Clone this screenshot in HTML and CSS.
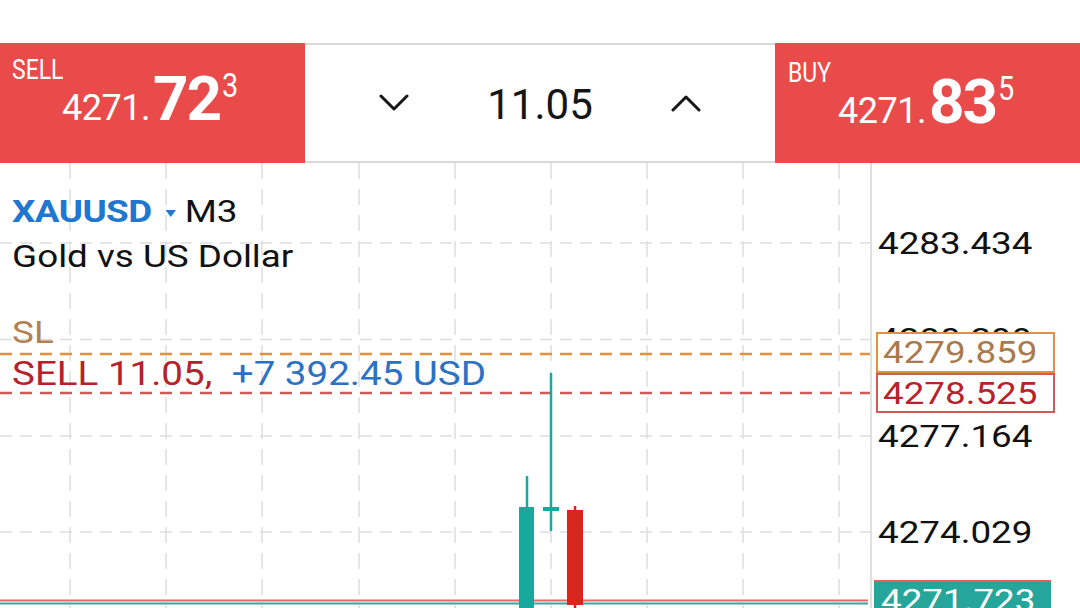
FILE: index.html
```html
<!DOCTYPE html>
<html lang="en">
<head>
    <meta charset="UTF-8">
    <meta name="viewport" content="width=device-width, initial-scale=1.0">
    <title>XAUUSD M3</title>
    <link rel="stylesheet" href="styles.css">
</head>
<body>

    <div class="status"></div>

    <div class="trade-bar">
        <div class="quote sell">
            <div class="quote-label">SELL</div>
            <div class="quote-price">
                <span class="price-pre">4271.</span>
                <span class="price-big">72</span>
                <span class="price-pip">3</span>
            </div>
        </div>

        <div class="volume">
            <svg class="chevron" width="30" height="18" viewBox="0 0 30 18">
                <path d="M2 2 L15 15 L28 2" />
            </svg>
            <span class="volume-value">11.05</span>
            <svg class="chevron" width="30" height="18" viewBox="0 0 30 18">
                <path d="M2 16 L15 3 L28 16" />
            </svg>
        </div>

        <div class="quote buy">
            <div class="quote-label">BUY</div>
            <div class="quote-price">
                <span class="price-pre">4271.</span>
                <span class="price-big">83</span>
                <span class="price-pip">5</span>
            </div>
        </div>
    </div>

    <div class="chart">
        <div class="plot">
            <svg class="plot-lines" width="870" height="445" viewBox="0 0 870 445">
                <!-- grid -->
                <path class="grid-h" d="M0 80H870 M0 176.5H870 M0 273H870 M0 369H870" />
                <path class="grid-v" d="M70 0V445 M166 0V445 M262 0V445 M359 0V445 M455 0V445 M551 0V445 M647 0V445 M743 0V445 M839 0V445" />

                <!-- trade levels -->
                <path class="level-sl" d="M0 191H870" />
                <path class="level-entry" d="M0 230H870" />
                <path class="line-ask" d="M0 437.5H868" />
                <path class="line-bid" d="M0 440.5H868" />

                <!-- candles -->
                <line class="wick up" x1="527" y1="313" x2="527" y2="344" />
                <rect class="body up" x="519" y="344" width="15" height="110" />
                <line class="wick up" x1="551" y1="210" x2="551" y2="368" />
                <rect class="body up" x="543" y="344" width="16" height="4" />
                <line class="wick down" x1="575" y1="343" x2="575" y2="445" />
                <rect class="body down" x="567" y="347" width="16" height="95" />
            </svg>

            <div class="chart-info">
                <div class="symbol">
                    <span class="ticker">XAUUSD</span>
                    <svg class="caret" width="9" height="7" viewBox="0 0 9 7"><path d="M0 0H9L4.5 7Z" /></svg>
                    <span class="period">M3</span>
                </div>
                <div class="desc">Gold vs US Dollar</div>
                <div class="sl-label">SL</div>
                <div class="pos-label">
                    <span class="pos-side">SELL 11.05,</span><span class="pos-profit">+7 392.45 USD</span>
                </div>
            </div>
        </div>

        <div class="axis">
            <span class="tick-label" style="top: 80px">4283.434</span>
            <span class="tick-label" style="top: 176px">4280.299</span>
            <span class="tick-label" style="top: 273px">4277.164</span>
            <span class="tick-label" style="top: 369px">4274.029</span>

            <div class="level-box sl" style="top: 169px"><span>4279.859</span></div>
            <div class="level-box entry" style="top: 210px"><span>4278.525</span></div>
            <div class="level-box bid" style="top: 417px"><span>4271.723</span></div>
        </div>
    </div>

</body>
</html>
```

FILE: styles.css
```css
* {
    margin: 0px;
    padding: 0px;
    box-sizing: border-box;
}

body {
    font-family: 'Roboto', 'Liberation Sans', sans-serif;
    background: #fff;
    width: 1080px;
    height: 608px;
    overflow: hidden;
    color: #111;
}

.status {
    height: 43px;
}

/* order bar */
.trade-bar {
    display: flex;
    height: 120px;
}

.quote {
    width: 305px;
    background: #e94b4b;
    color: #fff;
    display: flex;
    align-items: flex-start;
    padding: 13px 0 0 12px;
}

.quote.buy {
    padding: 16px 0 0 13px;
}

.quote-label {
    width: 50px;
    font-size: 28px;
    line-height: 28px;
    white-space: nowrap;
    transform: scaleX(0.82);
    transform-origin: left center;
}

.quote-price {
    display: flex;
    align-items: baseline;
    margin-top: 12px;
}

.price-pre {
    font-size: 36px;
    line-height: 36px;
    letter-spacing: -0.5px;
}

.price-big {
    font-size: 62px;
    line-height: 62px;
    font-weight: bold;
    letter-spacing: -2px;
    margin-left: 3px;
}

.price-pip {
    align-self: flex-start;
    font-size: 34px;
    line-height: 34px;
    margin-left: 2px;
    transform: scaleX(0.85);
    transform-origin: left center;
}

.volume {
    flex: 1;
    display: flex;
    align-items: center;
    justify-content: center;
    gap: 78px;
    border-top: 2px solid #d9d9d9;
    border-bottom: 2px solid #d9d9d9;
}

.volume-value {
    font-size: 42px;
    line-height: 42px;
    color: #151515;
    margin-top: 4px;
}

.chevron path {
    fill: none;
    stroke: #151515;
    stroke-width: 3;
    stroke-linecap: round;
    stroke-linejoin: round;
}

/* chart */
.chart {
    display: flex;
    height: 445px;
}

.plot {
    position: relative;
    width: 870px;
    overflow: hidden;
}

.plot-lines {
    position: absolute;
    left: 0;
    top: 0;
}

.grid-h, .grid-v {
    fill: none;
    stroke: #dedede;
    stroke-width: 1.5;
}

.grid-h {
    stroke-dasharray: 12 8;
}

.grid-v {
    stroke-dasharray: 16 10;
}

.level-sl, .level-entry {
    stroke-width: 2.5;
    stroke-dasharray: 12 8;
}

.level-sl {
    stroke: #e3913f;
}

.level-entry {
    stroke: #cf5a5a;
}

.line-ask {
    stroke: #e46b6b;
    stroke-width: 2;
}

.line-bid {
    stroke: #35a9a0;
    stroke-width: 2;
}

.wick {
    stroke-width: 2.5;
}

.wick.up {
    stroke: #17a89e;
}

.wick.down {
    stroke: #d9261c;
}

.body.up {
    fill: #17a89e;
}

.body.down {
    fill: #d9261c;
}

.chart-info {
    position: relative;
    padding: 25.5px 0 0 10.5px;
    font-size: 32px;
    transform: scaleX(1.15);
    transform-origin: left top;
    white-space: nowrap;
}

.symbol, .desc {
    line-height: 45px;
}

.ticker {
    font-weight: bold;
    color: #1f77d0;
    letter-spacing: -0.5px;
}

.caret {
    margin: 0 0 0 4px;
    vertical-align: middle;
}

.caret path {
    fill: #1f77d0;
}

.sl-label {
    margin-top: 33px;
    line-height: 41px;
    color: #b3804f;
}

.pos-label {
    font-size: 33.5px;
    line-height: 41px;
}

.pos-side {
    color: #b5222b;
}

.pos-profit {
    color: #2b71c4;
    margin-left: 17px;
}

/* price scale */
.axis {
    position: relative;
    flex: 1;
    border-left: 2px solid #e0e0e0;
    overflow: hidden;
}

.tick-label {
    position: absolute;
    left: 6px;
    font-size: 32px;
    line-height: 32px;
    white-space: nowrap;
    transform: translateY(-50%) scaleX(1.15);
    transform-origin: left center;
}

.level-box {
    position: absolute;
    left: 4px;
    width: 179px;
    height: 41px;
    border: 2px solid;
    background: #fff;
    font-size: 32px;
    line-height: 37px;
    padding-left: 5px;
    white-space: nowrap;
}

.level-box span {
    display: inline-block;
    transform: scaleX(1.15);
    transform-origin: left center;
}

.level-box.sl {
    border-color: #e0913f;
    color: #a97a4d;
}

.level-box.entry {
    height: 40px;
    border-color: #cf5a5a;
    color: #b8232b;
}

.level-box.bid {
    left: 2px;
    width: 177px;
    border: none;
    border-top: 2px solid #e06060;
    background: #26a69a;
    color: #fff;
    padding-left: 7px;
}
```
